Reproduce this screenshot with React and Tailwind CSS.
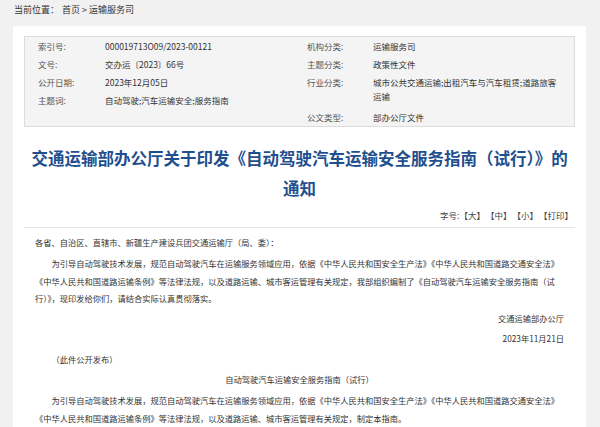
const leftMeta = [
  ["索引号:", "000019713O09/2023-00121"],
  ["文号:", "交办运〔2023〕66号"],
  ["公开日期:", "2023年12月05日"],
  ["主题词:", "自动驾驶;汽车运输安全;服务指南"],
];

const rightMeta = [
  ["机构分类:", "运输服务司"],
  ["主题分类:", "政策性文件"],
  ["行业分类:", "城市公共交通运输;出租汽车与汽车租赁;道路旅客运输"],
  ["公文类型:", "部办公厅文件"],
];

function MetaRow({ label, value, labelW, wrapped }) {
  return (
    <div className={`flex py-[2px] leading-[14px] ${wrapped ? "mb-[3px]" : ""}`}>
      <span className={`${labelW} shrink-0 text-[#555]`}>{label}</span>
      <span className="w-[184px] text-[#333]">{value}</span>
    </div>
  );
}

export default function App() {
  return (
    <div className="min-h-screen bg-[#f1f1f1] pl-[13px] pr-[14px] font-['Noto_Sans_CJK_SC','Noto_Sans',sans-serif] text-[#333]">
      <div className="h-[26px] pt-[4px] pl-px text-[9px] leading-[12px] text-[#333]">
        当前位置：<span className="ml-[3px]">首页 &gt; 运输服务司</span>
      </div>

      <div className="bg-white px-[11px] pt-[10px] pb-10">
        {/* meta box */}
        <div className="grid grid-cols-[282px_1fr] border border-[#dcdcdc] bg-[#f4f4f4] text-[8.5px]">
          <div className="pl-[13px]">
            {leftMeta.map(([l, v]) => (
              <MetaRow key={l} label={l} value={v} labelW="w-[67px]" />
            ))}
          </div>
          <div>
            {rightMeta.map(([l, v], i) => (
              <MetaRow key={l} label={l} value={v} labelW="w-[66px]" wrapped={i === 2} />
            ))}
          </div>
        </div>

        <h1 className="mt-[16px] text-center text-[16.5px] font-bold leading-[30px] text-[#1f4f8e]">
          交通运输部办公厅关于印发《自动驾驶汽车运输安全服务指南（试行）》的通知
        </h1>

        <div className="mt-[6px] flex justify-end border-b border-[#e6e6e6] pb-[6px] pr-[2px] text-[8.5px] leading-[12px] text-[#444]">
          <span>字号:</span>
          <span>【大】</span>
          <span className="ml-[1px]">【中】</span>
          <span className="ml-[1px]">【小】</span>
          <span className="ml-[1px]">【打印】</span>
        </div>

        <div className="mt-[6px] flex flex-col gap-[2.5px] px-[11px] text-[8.25px] leading-[17.5px] text-[#333]">
          <p>各省、自治区、直辖市、新疆生产建设兵团交通运输厅（局、委）：</p>
          <p className="mt-px indent-[2em]">
            为引导自动驾驶技术发展，规范自动驾驶汽车在运输服务领域应用，依据《中华人民共和国安全生产法》《中华人民共和国道路交通安全法》《中华人民共和国道路运输条例》等法律法规，以及道路运输、城市客运管理有关规定，我部组织编制了《自动驾驶汽车运输安全服务指南（试行）》，现印发给你们，请结合实际认真贯彻落实。
          </p>
          <p className="text-right">交通运输部办公厅</p>
          <p className="text-right">2023年11月21日</p>
          <p className="mt-px indent-[2em]">（此件公开发布）</p>
          <p className="text-center">自动驾驶汽车运输安全服务指南（试行）</p>
          <p className="mt-px indent-[2em]">
            为引导自动驾驶技术发展，规范自动驾驶汽车在运输服务领域应用，依据《中华人民共和国安全生产法》《中华人民共和国道路交通安全法》《中华人民共和国道路运输条例》等法律法规，以及道路运输、城市客运管理有关规定，制定本指南。
          </p>
          <p className="indent-[2em]">一、适用范围</p>
          <p className="indent-[2em]">
            本指南适用于在道路运输经营、城市公共交通等运输服务领域使用自动驾驶汽车开展经营活动。
          </p>
        </div>
      </div>
    </div>
  );
}
